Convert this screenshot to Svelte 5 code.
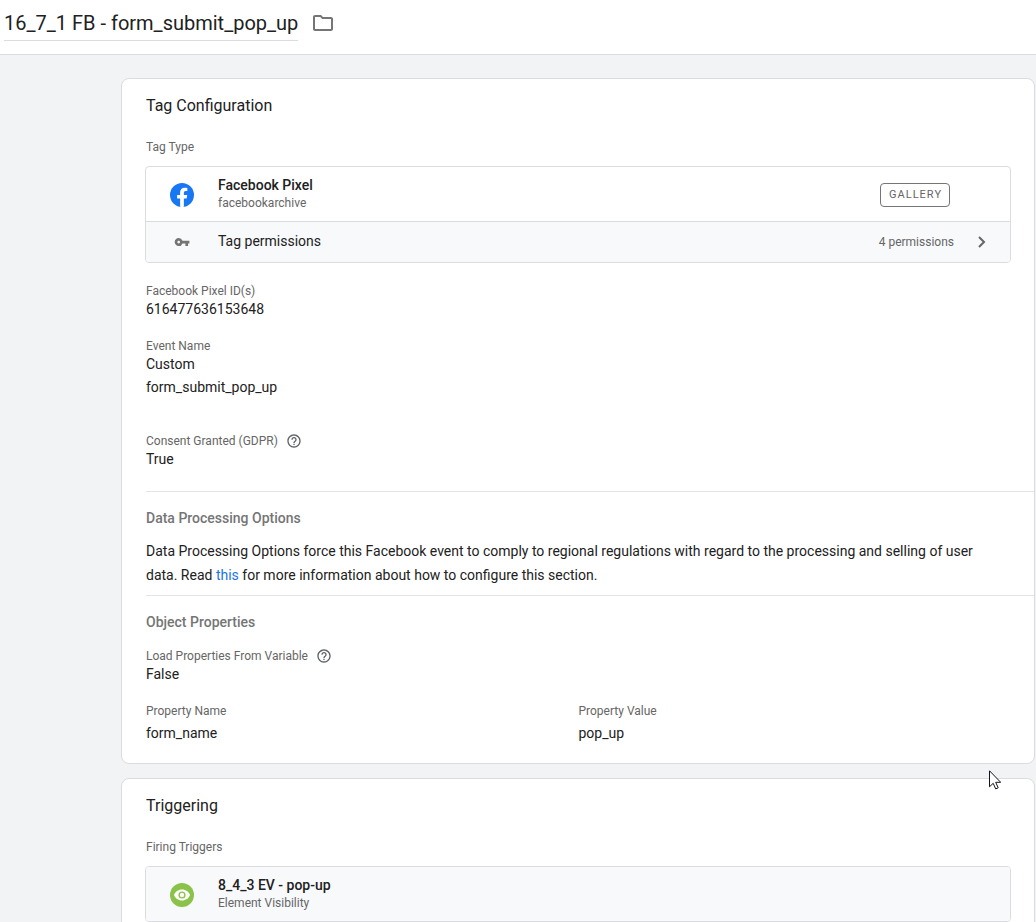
<script lang="ts">
  type Row = { name: string; value: string };

  let tagName = $state('16_7_1 FB - form_submit_pop_up');

  const properties: Row[] = [{ name: 'form_name', value: 'pop_up' }];
</script>

{#snippet help(label: string)}
  <button class="help" aria-label={label}>
    <svg viewBox="0 0 24 24" width="16" height="16" fill="currentColor">
      <path d="M11 18h2v-2h-2v2zm1-16C6.48 2 2 6.48 2 12s4.48 10 10 10 10-4.48 10-10S17.520 2 12 2zm0 18c-4.410 0-8-3.590-8-8s3.590-8 8-8 8 3.590 8 8-3.590 8-8 8zm0-14c-2.210 0-4 1.790-4 4h2c0-1.100.9-2 2-2s2 .9 2 2c0 2-3 1.750-3 5h2c0-2.250 3-2.500 3-5 0-2.210-1.790-4-4-4z" />
    </svg>
  </button>
{/snippet}

<div class="page">
  <header>
    <h1>{tagName}</h1>
    <button class="folder" aria-label="Move to folder">
      <svg viewBox="0 0 24 24" width="24" height="24" fill="currentColor">
        <path d="M9.170 6l2 2H20v10H4V6h5.170M10 4H4c-1.100 0-1.990.9-1.990 2L2 18c0 1.100.9 2 2 2h16c1.100 0 2-.9 2-2V8c0-1.100-.9-2-2-2h-8l-2-2z" />
      </svg>
    </button>
  </header>

  <main>
    <section class="card">
      <h2>Tag Configuration</h2>
      <div class="label">Tag Type</div>
      <div class="box">
        <div class="row">
          <svg class="logo" viewBox="0 0 24 24" width="24" height="24">
            <circle cx="12" cy="12" r="12" fill="#1877f2" />
            <path fill="#fff" d="M16.670 15.470l.53-3.470h-3.330V9.750c0-.95.47-1.870 1.960-1.870h1.510V4.920s-1.370-.23-2.690-.23c-2.740 0-4.530 1.660-4.530 4.670V12H7.080v3.470h3.040v8.390a12.100 12.100 0 0 0 3.750 0v-8.390h2.800z" />
          </svg>
          <div class="names">
            <div class="value strong">Facebook Pixel</div>
            <div class="label">facebookarchive</div>
          </div>
          <button class="gallery">GALLERY</button>
        </div>
        <button class="row permissions">
          <svg class="logo" viewBox="0 0 24 24" width="24" height="24">
            <g transform="translate(4 4) scale(.67)">
              <path fill="#757575" d="M12.650 10A5.990 5.990 0 0 0 7 6c-3.310 0-6 2.690-6 6s2.690 6 6 6a5.990 5.990 0 0 0 5.650-4H17v4h4v-4h2v-4H12.650zM7 14c-1.100 0-2-.9-2-2s.9-2 2-2 2 .9 2 2-.9 2-2 2z" />
            </g>
          </svg>
          <span class="names value">Tag permissions</span>
          <span class="label">4 permissions</span>
          <svg class="chevron" viewBox="0 0 24 24" width="24" height="24">
            <path d="M9 7l5 5-5 5" fill="none" stroke="#666" stroke-width="2" />
          </svg>
        </button>
      </div>

      <div class="field first">
        <div class="label">Facebook Pixel ID(s)</div>
        <div class="value">616477636153648</div>
      </div>
      <div class="field">
        <div class="label">Event Name</div>
        <div class="value">Custom</div>
        <div class="value custom">form_submit_pop_up</div>
      </div>
      <div class="field consent">
        <div class="label">Consent Granted (GDPR) {@render help('About consent')}</div>
        <div class="value">True</div>
      </div>

      <div class="group options">
        <h3>Data Processing Options</h3>
        <p>
          Data Processing Options force this Facebook event to comply to regional regulations with regard to
          the processing and selling of user data. Read <a href="#options">this</a> for more information about how to
          configure this section.
        </p>
      </div>

      <div class="group">
        <h3>Object Properties</h3>
        <div class="field load">
          <div class="label">Load Properties From Variable {@render help('About loading properties')}</div>
          <div class="value">False</div>
        </div>
        <table>
          <thead>
            <tr><th>Property Name</th><th>Property Value</th></tr>
          </thead>
          <tbody>
            {#each properties as prop}
              <tr><td>{prop.name}</td><td>{prop.value}</td></tr>
            {/each}
          </tbody>
        </table>
      </div>
    </section>

    <section class="card">
      <h2>Triggering</h2>
      <div class="label">Firing Triggers</div>
      <div class="box">
        <div class="row trigger">
          <svg class="logo" viewBox="0 0 24 24" width="24" height="24">
            <circle cx="12" cy="12" r="12" fill="#8bc34a" />
            <path fill="#fff" d="M12 6.500C8.300 6.500 5.200 8.800 4 12c1.200 3.200 4.300 5.500 8 5.500s6.800-2.300 8-5.500c-1.200-3.200-4.300-5.500-8-5.500z" />
            <circle cx="12" cy="12" r="2.900" fill="#fff" stroke="#8bc34a" stroke-width="1.400" />
          </svg>
          <div class="names">
            <div class="value strong">8_4_3 EV - pop-up</div>
            <div class="label">Element Visibility</div>
          </div>
        </div>
      </div>
    </section>
  </main>

  <svg class="cursor" viewBox="0 0 12 20" width="12" height="20" aria-hidden="true">
    <path d="M.5.8v16l3.700-3.500 2.500 5.600 2.500-1.100-2.500-5.500h5z" fill="#fff" stroke="#111122" />
  </svg>
</div>

<style>
  :global(body) {
    margin: 0;
  }
  .page {
    display: flex;
    flex-direction: column;
    height: 100vh;
    background: #f1f3f4;
    color: #212121;
    font-family: Roboto, sans-serif;
    font-size: 14px;
    line-height: 20px;
  }
  button {
    padding: 0;
    border: 0;
    background: none;
    color: inherit;
    font: inherit;
    text-align: left;
    cursor: pointer;
  }
  svg {
    display: block;
  }
  header {
    display: flex;
    flex: none;
    align-items: flex-start;
    gap: 13px;
    padding: 7px 4px 13px;
    border-bottom: 1px solid #dadce0;
    background: #fff;
  }
  h1 {
    margin: 0;
    padding-bottom: 1px;
    border-bottom: 1px solid #dadce0;
    font-size: 20px;
    font-weight: 400;
    line-height: 32px;
  }
  .folder {
    padding-top: 4px;
    color: #757575;
  }
  main {
    flex: 1;
    min-height: 0;
    padding: 23px 1px 0 121px;
    overflow-y: auto;
    scrollbar-width: none;
  }
  .card {
    margin-bottom: 14px;
    padding: 15px 23px 20px 24px;
    border: 1px solid #dadce0;
    border-radius: 8px;
    background: #fff;
  }
  h2 {
    margin: 0 0 21px;
    font-size: 16px;
    font-weight: 400;
    line-height: 24px;
  }
  .label, th {
    color: #666;
    font-size: 12px;
    font-weight: 400;
    line-height: 16px;
  }
  .field .label {
    display: flex;
    align-items: center;
    gap: 8px;
  }
  .strong {
    font-weight: 500;
  }
  .help {
    color: #5f6368;
  }
  .box {
    margin: 11px 0 0 -1px;
    border: 1px solid #dadce0;
    border-radius: 4px;
    overflow: hidden;
  }
  .row {
    display: flex;
    align-items: center;
    box-sizing: border-box;
    width: 100%;
    height: 54px;
    padding: 2px 16px 0 24px;
  }
  .names {
    flex: 1;
    margin-left: 24px;
    padding-bottom: 4px;
  }
  .gallery {
    margin-right: 44px;
    padding: 0 7px 0 8px;
    border: 1px solid #757575;
    border-radius: 4px;
    color: #666;
    font-size: 11px;
    letter-spacing: 1px;
    line-height: 22px;
  }
  .permissions {
    height: 41px;
    padding-top: 0;
    border-top: 1px solid #dadce0;
    background: #f8f9fb;
  }
  .permissions .names {
    padding-bottom: 2px;
  }
  .chevron {
    margin-left: 16px;
  }
  .trigger {
    background: #f8f9fb;
  }
  .field {
    margin-top: 19px;
  }
  .first {
    margin-top: 20px;
  }
  .custom {
    margin-top: 3px;
  }
  .consent {
    margin-top: 36px;
    margin-bottom: 22px;
  }
  .group {
    margin-right: -23px;
    padding: 16px 23px 0 0;
    border-top: 1px solid #e4e4e4;
  }
  .options {
    padding-bottom: 8px;
  }
  h3 {
    margin: 0;
    color: #757575;
    font-size: 14px;
    font-weight: 500;
    line-height: 20px;
  }
  p {
    margin: 11px 0 0;
    padding-right: 12px;
    line-height: 24px;
  }
  a {
    color: #1a73e8;
    text-decoration: none;
  }
  .load {
    margin-top: 16px;
  }
  table {
    width: 100%;
    margin-top: 19px;
    border-collapse: collapse;
    table-layout: fixed;
  }
  th, td {
    padding: 0;
    text-align: left;
  }
  td {
    padding-top: 4px;
  }
  .cursor {
    position: absolute;
    top: 770px;
    left: 989px;
  }
</style>
